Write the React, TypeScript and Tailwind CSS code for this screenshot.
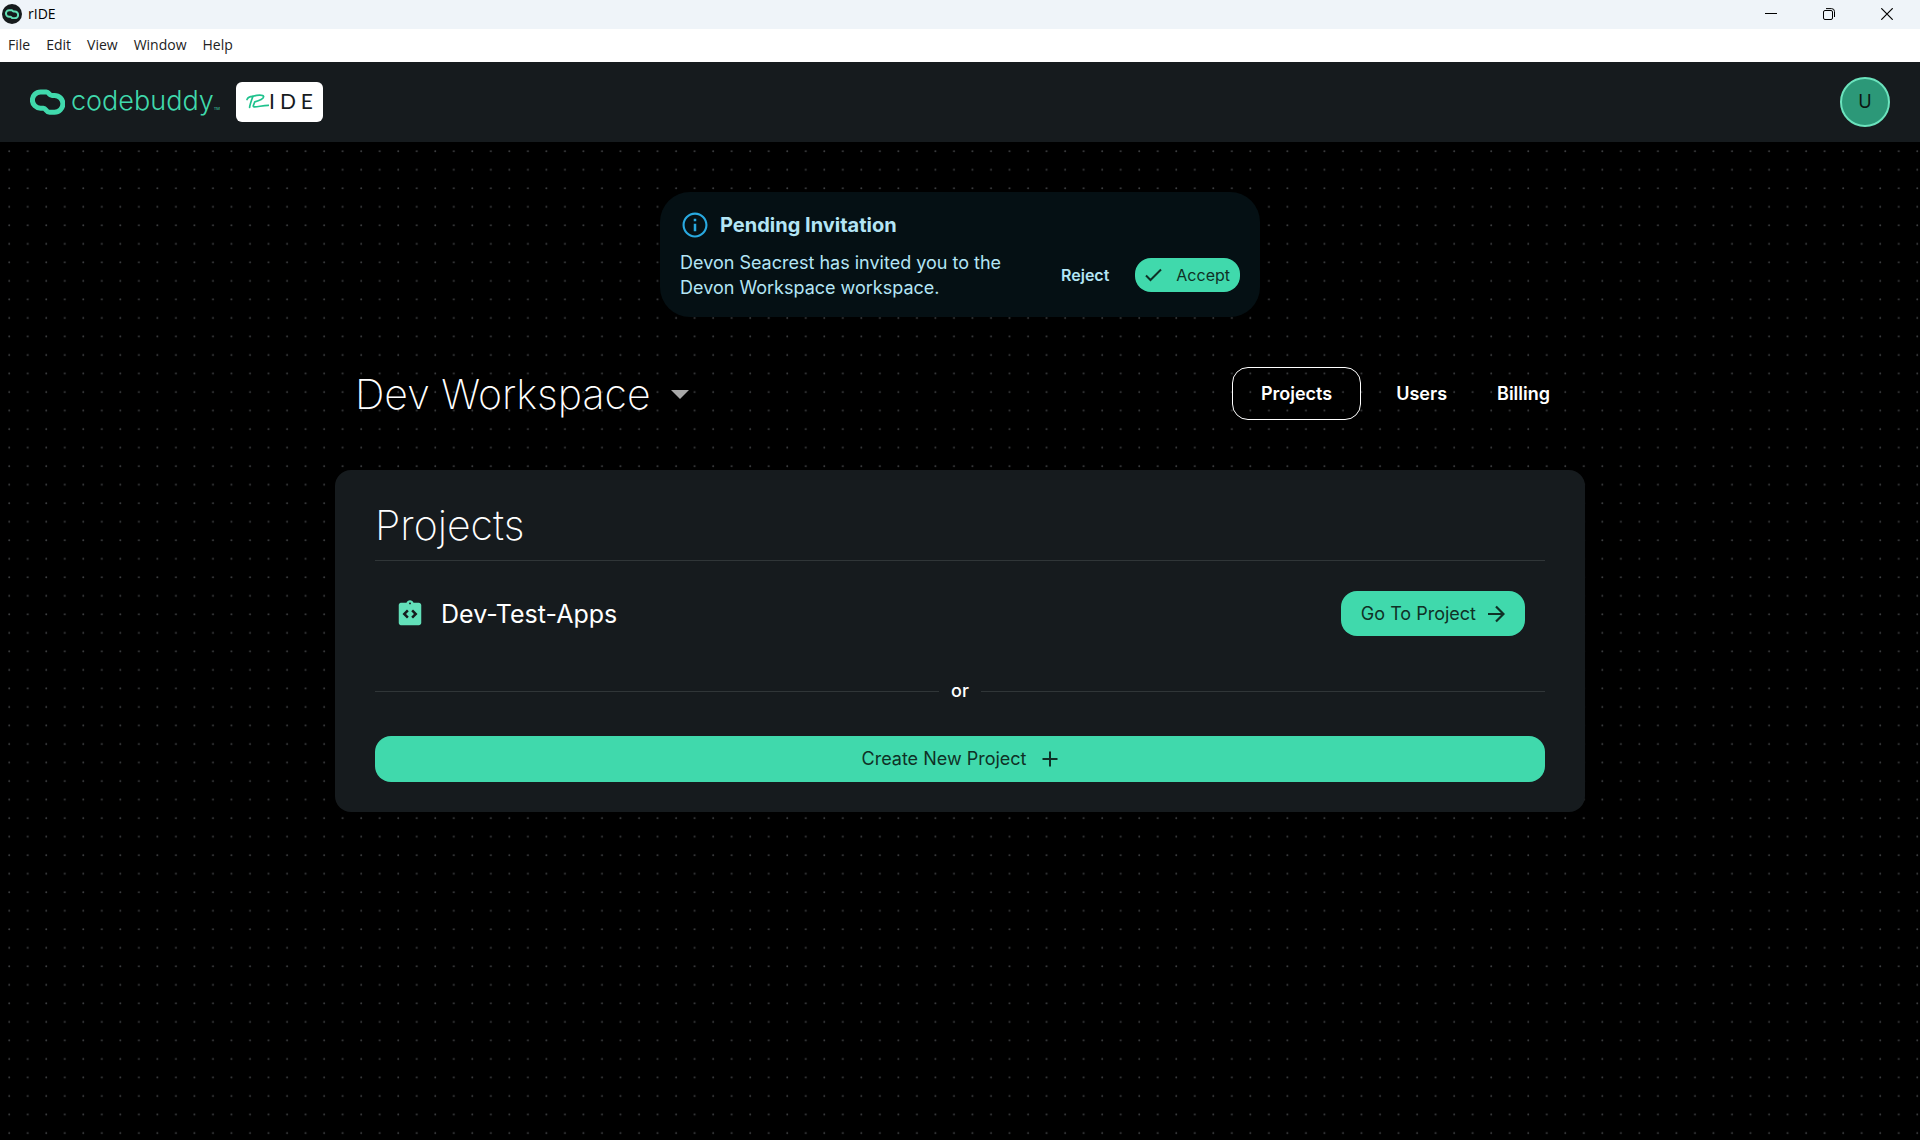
import { useState } from 'react';

interface Project {
    id: number;
    name: string;
}

const menuItems = ['File', 'Edit', 'View', 'Window', 'Help'];
const tabs = ['Projects', 'Users', 'Billing'];
const projects: Project[] = [{ id: 1, name: 'Dev-Test-Apps' }];

const LinkMark = ({ className }: { className: string }) => (
    <svg viewBox="0 0 35 26" fill="none" stroke="currentColor" strokeWidth="5" className={className} aria-hidden="true">
        <path d="M16.5 3H10.5a8 8 0 0 0 0 16.2H13.500c2.500 0 2.500 4 6 4h5a8.400 8.400 0 0 0 0-16.800H22c-3 0-3-3.400-5.500-3.400Z" />
    </svg>
);

const TitleBar = () => (
    <div className="flex h-[29px] items-center bg-[#eff4f9] pb-px text-black">
        <span className="ml-0.5 flex size-5 items-center justify-center rounded-full bg-[#161b1d]">
            <LinkMark className="w-[14px] text-[#62dfb5]" />
        </span>
        <span className="ml-1.5 text-sm">rIDE</span>
        <div className="ml-auto flex">
            <button aria-label="Minimize" className="flex h-7 w-[58px] items-center justify-center">
                <svg width="12" height="12" viewBox="0 0 12 12" stroke="currentColor"><path d="M0 5.5h12" /></svg>
            </button>
            <button aria-label="Restore" className="flex h-7 w-[58px] items-center justify-center">
                <svg width="12" height="12" viewBox="0 0 12 12" fill="none" stroke="currentColor">
                    <rect x=".5" y="2.5" width="9" height="9" rx="1.5" />
                    <path d="M3 .6h5.5a3 3 0 0 1 3 3V9" />
                </svg>
            </button>
            <button aria-label="Close" className="mr-1 flex h-7 w-[58px] items-center justify-center">
                <svg width="12" height="12" viewBox="0 0 12 12" stroke="currentColor" strokeWidth="1.2"><path d="M.3.3l11.4 11.4M11.7.3.3 11.7" /></svg>
            </button>
        </div>
    </div>
);

const Header = () => (
    <header className="flex h-20 items-center bg-[#161b1e] px-[30px]">
        <a href="#" className="flex items-center text-[#40d9ac]">
            <LinkMark className="w-[35px]" />
            <span className="ml-1.5 pb-0.5 text-[27px] leading-9 font-light">codebuddy</span>
            <span className="self-end pb-2.5 text-[4px] leading-none">TM</span>
        </a>
        <div className="ml-4 flex h-10 w-[87px] items-center rounded-md bg-white pl-2.5 text-[#161b1e]">
            <svg width="23" height="20" viewBox="0 0 23 20" fill="none" stroke="#1fc28d" strokeWidth="1.7" strokeLinecap="round" strokeLinejoin="round" aria-hidden="true">
                <path d="M1 7.5C2 5 4 4.2 7 4.3 6 7 4 12 3.6 15.5" />
                <path d="M7 4.3c4-1.3 10-1.8 10.6.2C18 6.5 13.5 8.800 8.800 9.800c-1 3-2.300 4.500-1 5 3 .5 9-1.600 14.700-1.500" />
            </svg>
            <div className="flex gap-[5px] pb-0.5 font-[Lato,sans-serif] text-[21px] leading-6">
                <span>I</span>
                <span>D</span>
                <span>E</span>
            </div>
        </div>
        <button aria-label="Account" className="ml-auto size-[50px] rounded-full border-2 border-[#6be3bd] bg-[#2c9878] text-lg text-[#0b1512]">
            U
        </button>
    </header>
);

const Dots = () => (
    <svg className="absolute inset-0 size-full" aria-hidden="true">
        <defs>
            <pattern id="dots" x="8" y="8" width="18.525" height="18.525" patternUnits="userSpaceOnUse">
                <circle cx="1.2" cy="1.2" r=".95" fill="#3f4143" />
            </pattern>
        </defs>
        <rect width="100%" height="100%" fill="url(#dots)" />
    </svg>
);

const Invitation = () => (
    <section className="mx-auto w-full max-w-[600px] rounded-[30px] bg-[#051014] px-5 pt-[18px] pb-[17px] text-[#b3e5f5]">
        <div className="flex items-center gap-2.5">
            <svg width="30" height="30" viewBox="0 0 24 24" fill="#29a9e0" aria-hidden="true">
                <path d="M11 7h2v2h-2zm0 4h2v6h-2zm1-9C6.480 2 2 6.480 2 12s4.480 10 10 10 10-4.480 10-10S17.520 2 12 2m0 18.300c-4.600 0-8.300-3.700-8.300-8.300S7.400 3.700 12 3.700s8.300 3.700 8.300 8.300-3.700 8.300-8.300 8.300" />
            </svg>
            <h2 className="text-xl leading-7 font-bold">Pending Invitation</h2>
        </div>
        <div className="mt-2.5 flex items-center">
            <p className="w-[350px] text-lg leading-[25px]">Devon Seacrest has invited you to the Devon Workspace workspace.</p>
            <button className="ml-auto px-1 text-base font-semibold">Reject</button>
            <button className="ml-[22px] flex h-[34px] items-center rounded-2xl bg-[#40d9ac] px-2.5 text-base text-[#0f3126]">
                <svg width="18" height="14" viewBox="0 0 18 14" fill="none" stroke="currentColor" strokeWidth="2" className="mr-[13px]" aria-hidden="true">
                    <path d="m1 7.5 4.5 4.5L16 1.5" />
                </svg>
                Accept
            </button>
        </div>
    </section>
);

const App = () => {
    const [activeTab, setActiveTab] = useState('Projects');

    return (
        <div className="flex min-h-screen flex-col bg-black font-[Inter,sans-serif]">
            <div className="font-['Open_Sans','Noto_Sans',sans-serif]">
                <TitleBar />
                <nav className="flex h-[33px] items-center gap-4 bg-white px-2 pb-0.5 text-sm text-[#222]">
                    {menuItems.map((item) => (
                        <button key={item}>{item}</button>
                    ))}
                </nav>
            </div>
            <Header />

            <main className="relative flex-1 text-white">
                <Dots />
                <div className="relative pt-[50px]">
                    <Invitation />

                    <div className="mx-auto mt-[50px] max-w-[1250px]">
                        <div className="flex h-[53px] items-center justify-between pr-2.5 pl-5">
                            <button className="flex items-center gap-5">
                                <h1 className="text-[41px] leading-[50px] font-extralight">Dev Workspace</h1>
                                <svg width="18" height="11" viewBox="0 0 18 11" fill="#a8a8a8" aria-hidden="true">
                                    <path d="M0 2h18l-9 9z" />
                                </svg>
                            </button>
                            <div className="flex">
                                {tabs.map((tab) => (
                                    <button
                                        key={tab}
                                        onClick={() => setActiveTab(tab)}
                                        className={`h-[53px] rounded-2xl border text-lg font-semibold ${
                                            tab === activeTab ? 'mr-2.5 border-white px-7' : 'border-transparent px-6'
                                        }`}
                                    >
                                        {tab}
                                    </button>
                                ))}
                            </div>
                        </div>

                        <section className="mt-[50px] rounded-2xl bg-[#161b1e] px-10 py-[30px]">
                            <h2 className="border-b border-[#303638] pb-2.5 text-[41px] leading-[50px] font-extralight">Projects</h2>
                            {projects.map((project) => (
                                <div key={project.id} className="flex items-center px-5 py-[30px]">
                                    <svg width="30" height="30" viewBox="0 0 24 24" fill="#62e0b9" aria-hidden="true">
                                        <path d="M19 3h-4.180C14.400 1.840 13.300 1 12 1s-2.400.84-2.820 2H5c-.14 0-.27.010-.4.040-.39.080-.74.280-1.010.55-.18.180-.33.400-.43.640S3 4.720 3 5v14c0 .27.060.54.160.78s.25.450.43.640c.27.270.62.470 1.010.55.130.020.260.030.4.030h14c1.100 0 2-.9 2-2V5c0-1.100-.9-2-2-2m-8 11.170-1.410 1.420L6 12l3.590-3.590L11 9.830 8.830 12zm1-9.920c-.41 0-.75-.34-.75-.75s.34-.75.75-.75.75.34.75.75-.34.75-.75.75m2.410 11.340L13 14.170 15.170 12 13 9.830l1.410-1.420L18 12z" />
                                    </svg>
                                    <span className="ml-4 text-[25px] leading-[30px]">{project.name}</span>
                                    <button className="ml-auto flex h-[45px] items-center gap-3 rounded-2xl bg-[#40d9ac] px-5 text-lg text-[#0f3126]">
                                        Go To Project
                                        <svg width="17" height="18" viewBox="0 0 17 18" fill="none" stroke="currentColor" strokeWidth="2.2" aria-hidden="true">
                                            <path d="M0 9h15.5M8 1.5 15.5 9 8 16.5" />
                                        </svg>
                                    </button>
                                </div>
                            ))}
                            <div className="mt-2.5 flex items-center gap-3 text-lg leading-[30px] font-medium">
                                <span className="h-px flex-1 bg-[#303638]"></span>
                                or
                                <span className="h-px flex-1 bg-[#303638]"></span>
                            </div>
                            <button className="mt-[30px] flex h-[46px] w-full items-center justify-center gap-3.5 rounded-2xl bg-[#40d9ac] text-lg text-[#0f3126]">
                                Create New Project
                                <svg width="18" height="18" viewBox="0 0 18 18" stroke="currentColor" strokeWidth="2" aria-hidden="true">
                                    <path d="M9 1.5v15M1.5 9h15" />
                                </svg>
                            </button>
                        </section>
                    </div>
                </div>
            </main>
        </div>
    );
};

export default App;
